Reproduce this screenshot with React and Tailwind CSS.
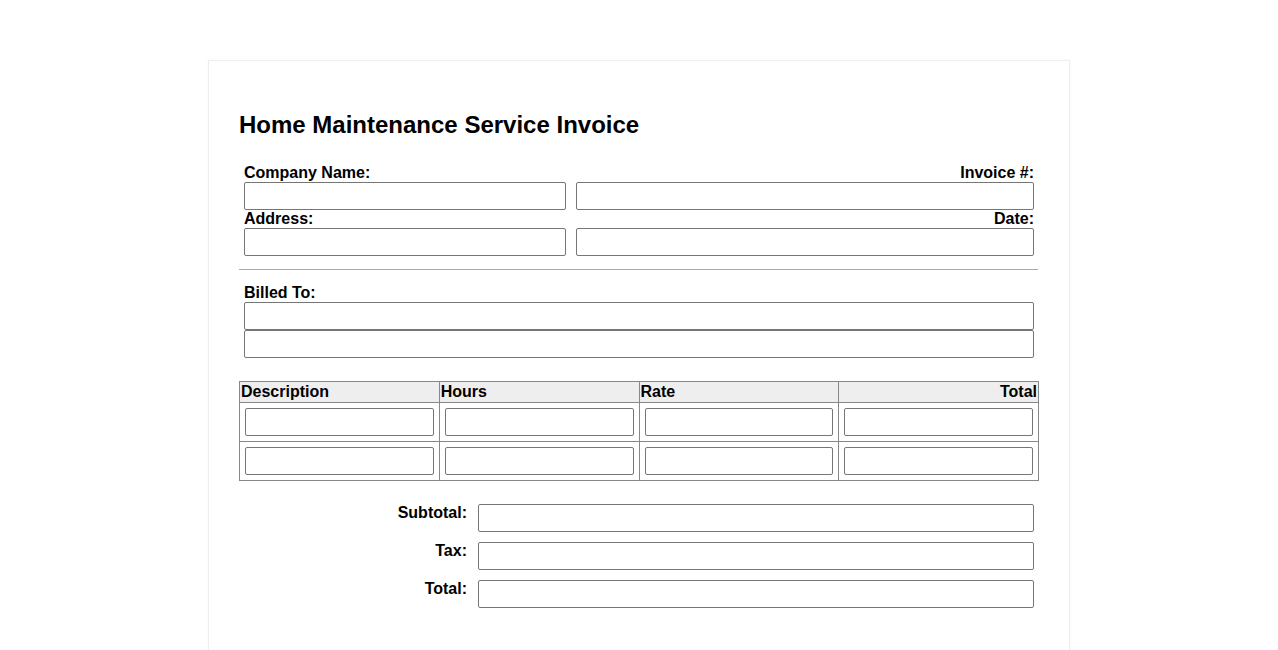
import React from "react";

// Blank invoice form, all fields empty
const Field = ({ className = "" }) => (
  <input
    type="text"
    className={`block h-[28px] border border-[#767676] rounded-[2px] bg-white px-1 outline-none ${className}`}
  />
);

const App = () => {
  const columns = ["Description", "Hours", "Rate", "Total"];
  const rows = [1, 2];

  return (
    <div
      className="min-h-screen bg-white pt-[60px] text-black"
      style={{ fontFamily: '"Liberation Sans", Arial, sans-serif' }}
    >
      <div className="mx-auto w-[862px] min-h-[620px] border border-[#eeeeee] shadow-[0_0_3px_rgba(0,0,0,0.04)] bg-white px-[30px] pt-[30px] pb-[30px]">
        {/* --- Title --- */}
        <h2 className="my-[20px] text-[24px] font-bold leading-[28px]">
          Home Maintenance Service Invoice
        </h2>

        {/* --- Company / Invoice Details --- */}
        <div className="flex pt-[5px] pb-[5px] text-[16px] font-bold leading-[18px]">
          <div className="w-[332px] px-[5px]">
            <div>Company Name:</div>
            <Field className="w-full" />
            <div>Address:</div>
            <Field className="w-full" />
          </div>
          <div className="flex-1 px-[5px] text-right">
            <div>Invoice #:</div>
            <Field className="w-full" />
            <div>Date:</div>
            <Field className="w-full" />
          </div>
        </div>

        <hr className="mt-[8px] mr-px border-0 border-t border-[#aaaaaa]" />

        {/* --- Billed To --- */}
        <div className="px-[5px] pt-[13px] text-[16px] font-bold leading-[19px]">
          <div>Billed To:</div>
          <Field className="w-full" />
          <Field className="w-full" />
        </div>

        {/* --- Items Table --- */}
        <table className="mt-[23px] w-full table-fixed border-collapse border border-[#888888] text-[16px] leading-[18px]">
          <thead>
            <tr className="bg-[#eeeeee]">
              {columns.map((col, i) => (
                <th
                  key={col}
                  className={`border border-[#888888] p-px font-bold ${
                    i === 3 ? "text-right" : "text-left"
                  }`}
                >
                  {col}
                </th>
              ))}
            </tr>
          </thead>
          <tbody>
            {rows.map((r) => (
              <tr key={r}>
                {columns.map((col) => (
                  <td key={col} className="border border-[#888888] p-[5px]">
                    <Field className="w-full" />
                  </td>
                ))}
              </tr>
            ))}
          </tbody>
        </table>

        {/* --- Totals --- */}
        <div className="mt-[23px] flex flex-col gap-[10px] pr-[5px] text-[16px] font-bold leading-[18px]">
          {["Subtotal:", "Tax:", "Total:"].map((label) => (
            <div key={label} className="flex items-start justify-end">
              <span className="pr-[11px] text-right">{label}</span>
              <Field className="w-[556px]" />
            </div>
          ))}
        </div>
      </div>
    </div>
  );
};

export default App;
